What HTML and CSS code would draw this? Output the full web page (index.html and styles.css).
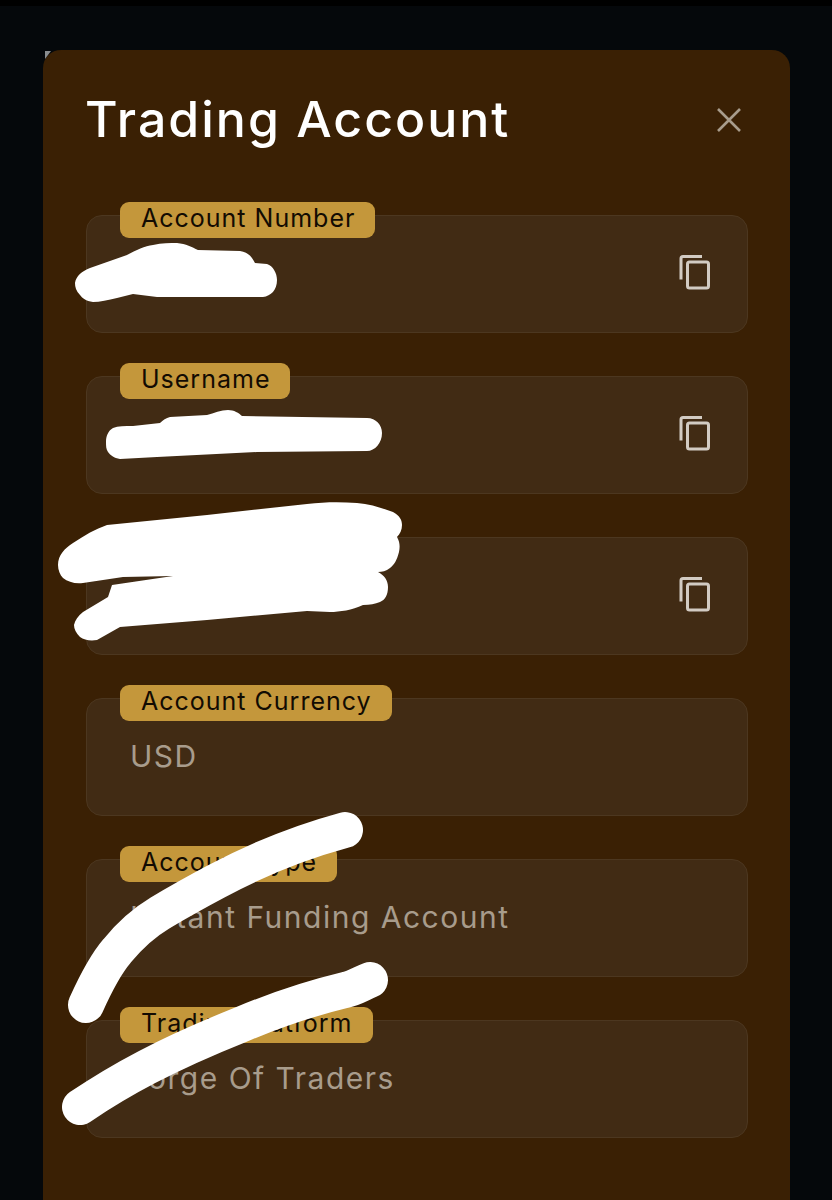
FILE: index.html
```html
<!DOCTYPE html>
<html lang="en">

<head>
    <meta charset="UTF-8">
    <meta name="viewport" content="width=device-width, initial-scale=1.0">
    <title>Trading Account</title>
    <link rel="stylesheet" href="styles.css">
</head>

<body>
    <div class="modal">
        <div class="modal-header">
            <h1>Trading Account</h1>
            <button class="close-btn" aria-label="Close">
                <svg width="26" height="26" viewBox="0 0 26 26" fill="none" stroke="currentColor" stroke-width="2.6">
                    <path d="M2 2 L24 24 M24 2 L2 24" />
                </svg>
            </button>
        </div>

        <div class="fields">
            <div class="field">
                <span class="field-label">Account Number</span>
                <span class="field-value">••••••</span>
                <button class="copy-btn" aria-label="Copy">
                    <svg width="34" height="38" viewBox="0 0 34 38" fill="none" stroke="currentColor" stroke-width="3">
                        <path d="M5 25.500 V4.500 Q5 2.500 7 2.500 H26" />
                        <rect x="11.500" y="8" width="21" height="26" rx="2" />
                    </svg>
                </button>
            </div>

            <div class="field">
                <span class="field-label">Username</span>
                <span class="field-value">••••••</span>
                <button class="copy-btn" aria-label="Copy">
                    <svg width="34" height="38" viewBox="0 0 34 38" fill="none" stroke="currentColor" stroke-width="3">
                        <path d="M5 25.500 V4.500 Q5 2.500 7 2.500 H26" />
                        <rect x="11.500" y="8" width="21" height="26" rx="2" />
                    </svg>
                </button>
            </div>

            <div class="field">
                <span class="field-label">Password</span>
                <span class="field-value">••••••</span>
                <button class="copy-btn" aria-label="Copy">
                    <svg width="34" height="38" viewBox="0 0 34 38" fill="none" stroke="currentColor" stroke-width="3">
                        <path d="M5 25.500 V4.500 Q5 2.500 7 2.500 H26" />
                        <rect x="11.500" y="8" width="21" height="26" rx="2" />
                    </svg>
                </button>
            </div>

            <div class="field">
                <span class="field-label">Account Currency</span>
                <span class="field-value">USD</span>
            </div>

            <div class="field">
                <span class="field-label">Account Type</span>
                <span class="field-value">Instant Funding Account</span>
            </div>

            <div class="field">
                <span class="field-label">Trading Platform</span>
                <span class="field-value">Forge Of Traders</span>
            </div>
        </div>
    </div>

    <!-- white marker scribbles drawn over the screenshot -->
    <svg class="scribbles" width="832" height="1200" viewBox="0 0 832 1200">
        <path class="corner" d="M45 51 H51 L45 59 Z" />
        <path class="blob" d="M75 283 C76 276 82 271 90 268 L127 255 C136 250 145 246 153 245 C162 243 170 243 177 243 C186 244 192 247 198 250 L240 251 C248 252 252 257 255 263 L267 264 C273 266 277 273 277 280 C277 290 271 296 263 297 L157 297 L133 294 L117 298 C108 300 100 302 93 302 C86 301 82 298 80 295 C76 291 75 287 75 283 Z" />
        <path class="blob" d="M106 442 C106 436 108 431 113 428 C118 426 125 426 133 426 L160 423 C163 420 166 418 170 417 L207 415 C214 413 221 410 228 410 C234 410 239 413 242 416 L367 418 C376 418 382 425 382 433 C382 443 375 451 367 451 L257 452 L157 457 L120 459 C114 458 110 455 108 452 C106 449 106 446 106 442 Z" />
        <path class="blob" d="M58 565 C58 555 65 548 73 543 C85 535 95 529 107 525 L207 515 L307 504 C325 502 340 502 357 503 C370 504 382 508 393 512 C400 516 402 520 402 525 C402 530 400 534 397 537 C400 542 400 547 399 552 C397 560 394 565 390 568 C386 571 382 572 378 572 C384 575 388 580 388 587 C388 595 385 600 380 602 C375 604 370 605 363 605 C352 610 340 612 330 612 L307 611 L207 620 L120 627 L97 640 C90 641 84 640 80 637 C76 633 74 629 74 625 C75 620 78 616 83 612 L108 597 L112 585 L173 576 L123 577 L83 583 C75 584 68 582 63 578 C60 575 58 570 58 565 Z" />
        <path class="stroke" d="M86 1005 C95 985 105 965 117 951 C130 935 145 922 160 913 C180 901 200 890 217 881 C245 866 290 845 345 830" />
        <path class="stroke" d="M80 1107 C120 1080 165 1055 240 1025 C285 1006 320 996 345 990 C355 988 362 983 370 980" />
    </svg>
</body>

</html>
```

FILE: styles.css
```css
* {
    margin: 0;
    padding: 0;
    box-sizing: border-box;
}

body {
    width: 832px;
    height: 1200px;
    overflow: hidden;
    position: relative;
    padding: 50px 42px 0 43px;
    font-family: 'Inter', sans-serif;
    background: #05080b;
    border-top: 6px solid #000;
}

.modal {
    margin-top: -6px;
    height: 1200px;
    padding: 0 42px 0 43px;
    background: #3a2004;
    border-radius: 18px 18px 0 0;
}

.modal-header {
    display: flex;
    justify-content: space-between;
    align-items: center;
    height: 140px;
}

h1 {
    margin-top: -2px;
    margin-left: -1px;
    font-size: 50px;
    font-weight: 500;
    color: #fff;
    letter-spacing: 2px;
}

.close-btn {
    display: flex;
    margin-right: 6px;
    border: none;
    background: none;
    color: #a89c8c;
}

.fields {
    display: flex;
    flex-direction: column;
    gap: 43px;
    margin-top: 25px;
}

.field {
    position: relative;
    display: flex;
    justify-content: space-between;
    align-items: flex-start;
    height: 118px;
    padding: 39px 37px 0 43px;
    background: #412b14;
    border: 1.5px solid #4c3720;
    border-radius: 16px;
}

.field-label {
    position: absolute;
    top: -14px;
    left: 33px;
    height: 36px;
    padding: 0 20px 0 21px;
    line-height: 33px;
    font-size: 25px;
    letter-spacing: 1px;
    color: #120b02;
    background: #c4973b;
    border-radius: 9px;
}

.field-value {
    font-size: 30px;
    line-height: 36px;
    color: #a89c8c;
    letter-spacing: 1.5px;
}

.copy-btn {
    display: flex;
    margin-top: -1px;
    border: none;
    background: none;
    color: #d2cbc3;
}

.scribbles {
    position: absolute;
    top: -6px;
    left: 0;
}

.corner {
    fill: #8a8d90;
}

.blob {
    fill: #fff;
}

.stroke {
    fill: none;
    stroke: #fff;
    stroke-width: 36;
    stroke-linecap: round;
}
```
